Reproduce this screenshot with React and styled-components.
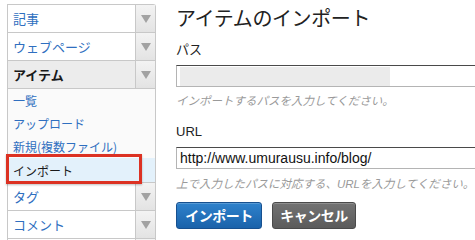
import React from "react";
import styled, { createGlobalStyle } from "styled-components";

const Global = createGlobalStyle`
  html, body { margin: 0; padding: 0; background: #fff; }
  body { font-family: "Liberation Sans", "Noto Sans CJK JP", sans-serif; overflow: hidden; }
`;

const Page = styled.div`
  display: flex;
  align-items: flex-start;
  padding: 4px 0 0 7px;
  width: 475px;
  height: 240px;
  box-sizing: border-box;
  overflow: hidden;
`;

const Sidebar = styled.nav`
  width: 149px;
  flex: none;
  border: 1px solid #c8c8c8;
  border-bottom: none;
  border-radius: 0 3px 0 0;
  box-sizing: border-box;
  font-family: "Noto Sans CJK JP", sans-serif;
`;

const Header = styled.div`
  display: grid;
  grid-template-columns: 1fr 20px;
  height: 28px;
  box-sizing: border-box;
  border-bottom: 1px solid #c8c8c8;
  background: ${(p) => (p.$active ? "#ececec" : "#fff")};
`;

const HeaderLabel = styled.span`
  display: flex;
  align-items: center;
  padding-left: 5px;
  font-size: 13px;
  font-weight: ${(p) => (p.$active ? 700 : 400)};
  color: ${(p) => (p.$active ? "#1a1a1a" : "#2f6fc0")};
`;

const Arrow = styled.span`
  display: flex;
  align-items: center;
  justify-content: center;
  border-left: 1px solid #c8c8c8;
  background: linear-gradient(#f3f3f3, #e3e3e3);
  svg { display: block; }
`;

const SubMenu = styled.ul`
  list-style: none;
  margin: 0;
  padding: 0;
  background: #fafafa;
  border-bottom: 1px solid #c8c8c8;
`;

const SubItem = styled.li`
  position: relative;
  height: ${(p) => (p.$active ? "24px" : "23px")};
  display: flex;
  align-items: center;
  padding-left: 5px;
  font-size: 12px;
  color: ${(p) => (p.$active ? "#1a1a1a" : "#2f6fc0")};
  background: ${(p) => (p.$active ? "#e3f1fb" : "transparent")};
  &::after {
    content: "";
    display: ${(p) => (p.$active ? "block" : "none")};
    position: absolute;
    left: -2px;
    top: -4px;
    width: 136px;
    height: 30px;
    box-sizing: border-box;
    border: 3px solid #dc3223;
    box-shadow: 0 1px 2px rgba(0,0,0,0.25);
  }
`;

const Main = styled.main`
  margin-left: 20px;
  flex: none;
  width: 320px;
  display: flex;
  flex-direction: column;
  font-family: "Noto Sans CJK JP", sans-serif;
  color: #222;
`;

const Title = styled.h1`
  margin: 1px 0 0;
  font-size: 20px;
  font-weight: 400;
  line-height: 26px;
  letter-spacing: -0.4px;
`;

const Label = styled.label`
  margin-top: ${(p) => p.$mt}px;
  font-size: 13px;
  line-height: 18px;
  font-family: "Liberation Sans", "Noto Sans CJK JP", sans-serif;
`;

const Field = styled.div`
  margin-top: ${(p) => p.$mt}px;
  height: 22px;
  width: 320px;
  box-sizing: border-box;
  border: 1px solid #b4b4b4;
  border-top-color: #4a4a4a;
  background: #fff;
  display: flex;
  align-items: center;
  padding: 0 3px;
  font-family: "Liberation Sans", sans-serif;
  font-size: 14px;
  color: #111;
`;

const Redacted = styled.span`
  display: block;
  width: 210px;
  height: 19px;
  background: #ebebeb;
`;

const Hint = styled.p`
  margin: ${(p) => p.$mt}px 0 0;
  font-size: 11.5px;
  line-height: 15px;
  font-style: italic;
  color: #9a9a9a;
  white-space: nowrap;
  font-family: "Liberation Sans", "Noto Sans CJK JP", sans-serif;
`;

const Buttons = styled.div`
  display: flex;
  gap: 10px;
  margin-top: 10px;
`;

const Button = styled.button`
  height: 27px;
  padding: 0;
  border-radius: 3px;
  border: 1px solid ${(p) => (p.$primary ? "#17508f" : "#4a4a4a")};
  background: ${(p) =>
    p.$primary
      ? "linear-gradient(#2f82cc, #1a62aa)"
      : "linear-gradient(#737373, #5b5b5b)"};
  color: #fff;
  font-family: "Noto Sans CJK JP", sans-serif;
  font-weight: 700;
  font-size: 14px;
  letter-spacing: -0.5px;
  line-height: 25px;
  white-space: nowrap;
  text-align: center;
  box-shadow: inset 0 1px 0 rgba(255,255,255,0.2);
  width: ${(p) => p.$w}px;
`;

const Tri = () => (
  <svg width="10" height="8" viewBox="0 0 10 8">
    <path d="M0 0 H10 L5 8 Z" fill="#a2a2a2" />
  </svg>
);

const HeaderRow = ({ label, active }) => (
  <Header $active={active}>
    <HeaderLabel $active={active}>{label}</HeaderLabel>
    <Arrow>
      <Tri />
    </Arrow>
  </Header>
);

export default function App() {
  return (
    <>
      <Global />
      <Page>
        <Sidebar>
          <HeaderRow label="記事" />
          <HeaderRow label="ウェブページ" />
          <HeaderRow label="アイテム" active />
          <SubMenu>
            <SubItem>一覧</SubItem>
            <SubItem>アップロード</SubItem>
            <SubItem>新規(複数ファイル)</SubItem>
            <SubItem $active>インポート</SubItem>
          </SubMenu>
          <HeaderRow label="タグ" />
          <HeaderRow label="コメント" />
          <HeaderRow label="" />
        </Sidebar>
        <Main>
          <Title>アイテムのインポート</Title>
          <Label $mt={10}>パス</Label>
          <Field $mt={6}>
            <Redacted />
          </Field>
          <Hint $mt={7}>インポートするパスを入力してください。</Hint>
          <Label $mt={14}>URL</Label>
          <Field $mt={6}>http://www.umurausu.info/blog/</Field>
          <Hint $mt={8}>上で入力したパスに対応する、URLを入力してください。</Hint>
          <Buttons>
            <Button $primary $w={86}>インポート</Button>
            <Button $w={84}>キャンセル</Button>
          </Buttons>
        </Main>
      </Page>
    </>
  );
}
